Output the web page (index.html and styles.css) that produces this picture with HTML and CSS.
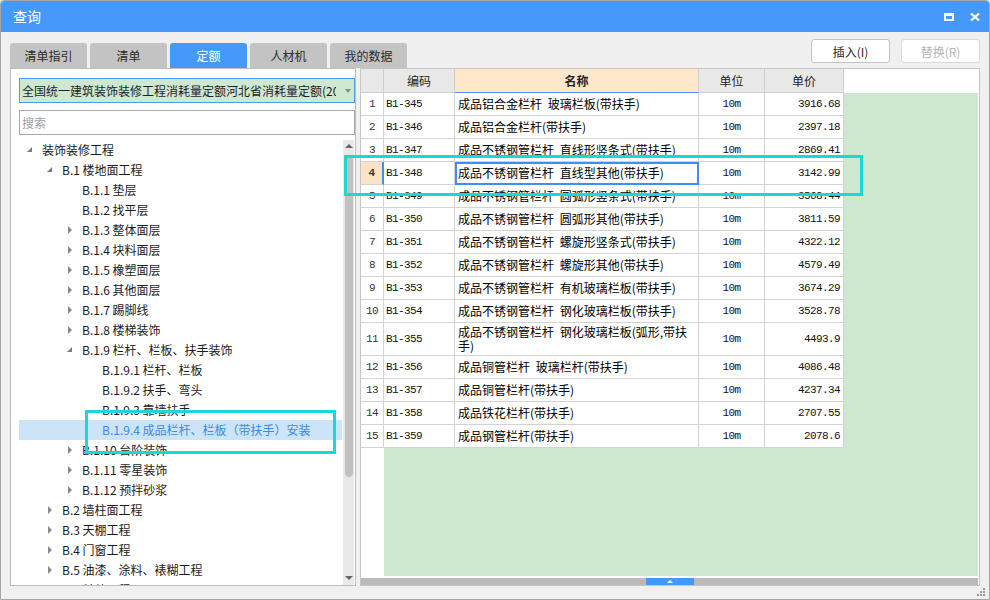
FILE: index.html
```html
<!DOCTYPE html>
<html lang="zh-CN">
<head>
<meta charset="utf-8">
<title>查询</title>
<link rel="stylesheet" href="styles.css">
</head>
<body>
<div class="window">
  <div class="titlebar">
    <span class="title">查询</span>
    <span class="ico-max"></span>
    <svg class="ico-close" width="10" height="8" viewBox="0 0 10 8"><path d="M1 0.5 L9 7.5 M9 0.5 L1 7.5" stroke="#fff" stroke-width="2.2"/></svg>
  </div>

  <div class="toolbar">
    <div class="tabs">
      <div class="tab">清单指引</div>
      <div class="tab">清单</div>
      <div class="tab active">定额</div>
      <div class="tab">人材机</div>
      <div class="tab">我的数据</div>
    </div>
    <div class="actions">
      <button class="btn">插入(I)</button>
      <button class="btn" disabled>替换(R)</button>
    </div>
  </div>

  <div class="main">
    <div class="left">
      <div class="select">
        <span class="select-text">全国统一建筑装饰装修工程消耗量定额河北省消耗量定额(2013)</span>
        <span class="caret"></span>
      </div>
      <input class="search" type="text" placeholder="搜索">
      <div class="tree">
        <div class="tree-list">
          <div class="node l0"><i class="tw open"></i><span>装饰装修工程</span></div>
          <div class="node l1"><i class="tw open"></i><span>B.1 楼地面工程</span></div>
          <div class="node l2"><i class="tw"></i><span>B.1.1 垫层</span></div>
          <div class="node l2"><i class="tw"></i><span>B.1.2 找平层</span></div>
          <div class="node l2"><i class="tw shut"></i><span>B.1.3 整体面层</span></div>
          <div class="node l2"><i class="tw shut"></i><span>B.1.4 块料面层</span></div>
          <div class="node l2"><i class="tw shut"></i><span>B.1.5 橡塑面层</span></div>
          <div class="node l2"><i class="tw shut"></i><span>B.1.6 其他面层</span></div>
          <div class="node l2"><i class="tw shut"></i><span>B.1.7 踢脚线</span></div>
          <div class="node l2"><i class="tw shut"></i><span>B.1.8 楼梯装饰</span></div>
          <div class="node l2"><i class="tw open"></i><span>B.1.9 栏杆、栏板、扶手装饰</span></div>
          <div class="node l3"><i class="tw"></i><span>B.1.9.1 栏杆、栏板</span></div>
          <div class="node l3"><i class="tw"></i><span>B.1.9.2 扶手、弯头</span></div>
          <div class="node l3"><i class="tw"></i><span>B.1.9.3 靠墙扶手</span></div>
          <div class="node l3 selected"><i class="tw"></i><span>B.1.9.4 成品栏杆、栏板（带扶手）安装</span></div>
          <div class="node l2"><i class="tw shut"></i><span>B.1.10 台阶装饰</span></div>
          <div class="node l2"><i class="tw shut"></i><span>B.1.11 零星装饰</span></div>
          <div class="node l2"><i class="tw shut"></i><span>B.1.12 预拌砂浆</span></div>
          <div class="node l1"><i class="tw shut"></i><span>B.2 墙柱面工程</span></div>
          <div class="node l1"><i class="tw shut"></i><span>B.3 天棚工程</span></div>
          <div class="node l1"><i class="tw shut"></i><span>B.4 门窗工程</span></div>
          <div class="node l1"><i class="tw shut"></i><span>B.5 油漆、涂料、裱糊工程</span></div>
          <div class="node l1"><i class="tw shut"></i><span>B.6 其他工程</span></div>
        </div>
        <div class="vscroll">
          <span class="vs-up"></span>
          <span class="vs-thumb"></span>
          <span class="vs-down"></span>
        </div>
      </div>
    </div>

    <div class="right">
      <div class="grid-head">
        <div class="hrow">
          <div class="hc"></div>
          <div class="hc">编码</div>
          <div class="hc current">名称</div>
          <div class="hc">单位</div>
          <div class="hc">单价</div>
        </div>
      </div>
      <div class="grid-body">
        <div class="rows">
          <div class="row"><div class="c num">1</div><div class="c code">B1-345</div><div class="c name">成品铝合金栏杆 玻璃栏板(带扶手)</div><div class="c unit">10m</div><div class="c price">3916.68</div></div>
          <div class="row"><div class="c num">2</div><div class="c code">B1-346</div><div class="c name">成品铝合金栏杆(带扶手)</div><div class="c unit">10m</div><div class="c price">2397.18</div></div>
          <div class="row"><div class="c num">3</div><div class="c code">B1-347</div><div class="c name">成品不锈钢管栏杆 直线形竖条式(带扶手)</div><div class="c unit">10m</div><div class="c price">2869.41</div></div>
          <div class="row cur"><div class="c num">4</div><div class="c code">B1-348</div><div class="c name">成品不锈钢管栏杆 直线型其他(带扶手)</div><div class="c unit">10m</div><div class="c price">3142.99</div></div>
          <div class="row"><div class="c num">5</div><div class="c code">B1-349</div><div class="c name">成品不锈钢管栏杆 圆弧形竖条式(带扶手)</div><div class="c unit">10m</div><div class="c price">3568.44</div></div>
          <div class="row"><div class="c num">6</div><div class="c code">B1-350</div><div class="c name">成品不锈钢管栏杆 圆弧形其他(带扶手)</div><div class="c unit">10m</div><div class="c price">3811.59</div></div>
          <div class="row"><div class="c num">7</div><div class="c code">B1-351</div><div class="c name">成品不锈钢管栏杆 螺旋形竖条式(带扶手)</div><div class="c unit">10m</div><div class="c price">4322.12</div></div>
          <div class="row"><div class="c num">8</div><div class="c code">B1-352</div><div class="c name">成品不锈钢管栏杆 螺旋形其他(带扶手)</div><div class="c unit">10m</div><div class="c price">4579.49</div></div>
          <div class="row"><div class="c num">9</div><div class="c code">B1-353</div><div class="c name">成品不锈钢管栏杆 有机玻璃栏板(带扶手)</div><div class="c unit">10m</div><div class="c price">3674.29</div></div>
          <div class="row"><div class="c num">10</div><div class="c code">B1-354</div><div class="c name">成品不锈钢管栏杆 钢化玻璃栏板(带扶手)</div><div class="c unit">10m</div><div class="c price">3528.78</div></div>
          <div class="row tall"><div class="c num">11</div><div class="c code">B1-355</div><div class="c name">成品不锈钢管栏杆 钢化玻璃栏板(弧形,带扶<br>手)</div><div class="c unit">10m</div><div class="c price">4493.9</div></div>
          <div class="row"><div class="c num">12</div><div class="c code">B1-356</div><div class="c name">成品铜管栏杆 玻璃栏杆(带扶手)</div><div class="c unit">10m</div><div class="c price">4086.48</div></div>
          <div class="row"><div class="c num">13</div><div class="c code">B1-357</div><div class="c name">成品铜管栏杆(带扶手)</div><div class="c unit">10m</div><div class="c price">4237.34</div></div>
          <div class="row"><div class="c num">14</div><div class="c code">B1-358</div><div class="c name">成品铁花栏杆(带扶手)</div><div class="c unit">10m</div><div class="c price">2707.55</div></div>
          <div class="row"><div class="c num">15</div><div class="c code">B1-359</div><div class="c name">成品钢管栏杆(带扶手)</div><div class="c unit">10m</div><div class="c price">2078.6</div></div>
        </div>
      </div>
      <div class="hscroll"><span class="hthumb"></span></div>
    </div>
  </div>

  <div class="statusbar">
    <svg class="grip" width="10" height="10" viewBox="0 0 10 10">
      <rect x="7" y="1" width="2" height="2" fill="#9a9a9a"/>
      <rect x="4" y="4" width="2" height="2" fill="#9a9a9a"/>
      <rect x="7" y="4" width="2" height="2" fill="#9a9a9a"/>
      <rect x="1" y="7" width="2" height="2" fill="#9a9a9a"/>
      <rect x="4" y="7" width="2" height="2" fill="#9a9a9a"/>
      <rect x="7" y="7" width="2" height="2" fill="#9a9a9a"/>
    </svg>
  </div>

  <div class="mark mark-grid"></div>
  <div class="mark mark-tree"></div>
</div>
</body>
</html>
```

FILE: styles.css
```css
* { box-sizing: border-box; }
html, body { margin: 0; padding: 0; }
body {
  width: 990px;
  height: 600px;
  overflow: hidden;
  background: #ffffff;
  font-family: "Noto Sans CJK SC", "Microsoft YaHei", sans-serif;
  font-size: 12px;
  color: #222;
}

.window {
  position: relative;
  width: 990px;
  height: 600px;
  border: 1px solid #a6a6a6;
  border-radius: 4px 4px 0 0;
  background: #f0f0f0;
  display: flex;
  flex-direction: column;
  overflow: hidden;
}

/* ---------- title bar ---------- */
.titlebar {
  flex: none;
  height: 31px;
  background: #4599fb;
  color: #fff;
  display: flex;
  align-items: center;
  padding: 0 9px 0 12px;
}
.title { flex: 1; font-size: 14px; line-height: 31px; }
.ico-max {
  width: 10px;
  height: 8px;
  border: 2px solid #fff;
  border-top-width: 3px;
  margin-right: 16px;
}
.ico-close { display: block; }

/* ---------- toolbar ---------- */
.toolbar {
  flex: none;
  height: 36px;
  display: flex;
  align-items: flex-end;
  padding: 0 9px 0 9px;
}
.tabs { display: flex; gap: 3px; }
.tab {
  width: 77px;
  height: 25px;
  background: #c3c3c3;
  border-radius: 3px 3px 0 0;
  color: #2a2a2a;
  font-size: 12px;
  display: flex;
  align-items: center;
  justify-content: center;
}
.tab.active { background: #4599fb; color: #fff; }
.actions {
  margin-left: auto;
  align-self: flex-start;
  margin-top: 7px;
  display: flex;
  gap: 11px;
}
.btn {
  width: 79px;
  height: 24px;
  padding: 0;
  background: #fff;
  border: 1px solid #c4c4c4;
  border-radius: 3px;
  font-family: "Noto Sans CJK SC", sans-serif;
  font-size: 12px;
  color: #2a2a2a;
}
.btn:disabled { color: #b4b4b4; border-color: #dadada; }

/* ---------- main ---------- */
.main {
  flex: none;
  height: 518px;
  display: flex;
  gap: 4px;
  padding: 0 9px;
}

/* left panel */
.left {
  width: 346px;
  flex: none;
  background: #fff;
  border: 1px solid #bdbdbd;
  display: flex;
  flex-direction: column;
  padding: 9px 0 0 8px;
}
.select {
  width: 336px;
  height: 25px;
  flex: none;
  background: #cee8d1;
  border: 1px solid #4a9cee;
  display: flex;
  align-items: center;
  padding-left: 2px;
}
.select-text {
  width: 314px;
  overflow: hidden;
  white-space: nowrap;
  color: #1e1e1e;
}
.caret {
  margin-left: 9px;
  width: 0;
  height: 0;
  border-left: 3px solid transparent;
  border-right: 3px solid transparent;
  border-top: 4px solid #8a8a8a;
}
.search {
  width: 336px;
  height: 25px;
  flex: none;
  margin: 7px 0 0 0;
  border: 1px solid #a9a9a9;
  padding: 0 2px;
  font-family: "Noto Sans CJK SC", sans-serif;
  font-size: 12px;
  outline: none;
  background: #fff;
}
.search::placeholder { color: #a0a0a0; }

.tree {
  flex: 1;
  min-height: 0;
  margin-top: 5px;
  margin-left: -8px;
  display: flex;
}
.tree-list {
  flex: 1;
  min-width: 0;
  overflow: hidden;
  padding-left: 8px;
  margin-right: 1px;
}
.node {
  height: 20px;
  display: flex;
  align-items: flex-start;
  white-space: nowrap;
  color: #1b1b1b;
  font-size: 12px;
}
.node span { line-height: 19px; }
.node.l0 { padding-left: 4px; }
.node.l1 { padding-left: 24px; }
.node.l2 { padding-left: 44px; }
.node.l3 { padding-left: 64px; }
.node.selected { background: #cce4f7; color: #3a8ae2; }
.tw {
  width: 16px;
  height: 20px;
  margin-right: 3px;
  flex: none;
  position: relative;
}
.tw.open::before {
  content: "";
  position: absolute;
  left: 4px;
  top: 7px;
  width: 0;
  height: 0;
  border-left: 5px solid transparent;
  border-bottom: 5px solid #7c7c7c;
}
.tw.shut::before {
  content: "";
  position: absolute;
  left: 5px;
  top: 6px;
  width: 0;
  height: 0;
  border-top: 4px solid transparent;
  border-bottom: 4px solid transparent;
  border-left: 4px solid #8a8a8a;
}

.vscroll {
  width: 11px;
  flex: none;
  margin-right: 1px;
  background: #e8e8e8;
  display: flex;
  flex-direction: column;
  align-items: center;
}
.vs-up {
  margin-top: 4px;
  width: 0;
  height: 0;
  border-left: 4px solid transparent;
  border-right: 4px solid transparent;
  border-bottom: 4px solid #666;
}
.vs-thumb {
  margin-top: 7px;
  width: 8px;
  height: 322px;
  border-radius: 4px;
  background: #c1c1c1;
}
.vs-down {
  margin-top: auto;
  margin-bottom: 5px;
  width: 0;
  height: 0;
  border-left: 4px solid transparent;
  border-right: 4px solid transparent;
  border-top: 4px solid #666;
}

/* right panel */
.right {
  width: 620px;
  flex: none;
  border: 1px solid #c6c6c6;
  background: #fff;
  padding-right: 1px;
  display: flex;
  flex-direction: column;
}
.grid-head { flex: none; background: #fff; }
.hrow, .row {
  display: grid;
  grid-template-columns: 23px 71px 244px 66px 79px;
  width: 483px;
}
.hc {
  height: 24px;
  background: #e8e8e8;
  border-right: 1px solid #cfcfcf;
  border-bottom: 1px solid #cfcfcf;
  display: flex;
  align-items: center;
  justify-content: center;
  font-size: 12px;
  color: #222;
}
.hc.current {
  background: #fee7ca;
  font-weight: bold;
  border-bottom-color: #4a97f0;
}

.grid-body {
  flex: 1;
  min-height: 0;
  background: linear-gradient(90deg, #fff 23px, #cde8cf 23px);
  border-bottom: 1px solid #fff;
}
.rows { width: 483px; background: #fff; }
.row { height: 23px; }
.row.tall { height: 33px; }
.c {
  border-right: 1px solid #d3d3d3;
  border-bottom: 1px solid #d3d3d3;
  display: flex;
  align-items: center;
  overflow: hidden;
  white-space: nowrap;
  color: #111;
}
.c.num {
  justify-content: center;
  font-family: "Liberation Mono", monospace;
  font-size: 11px;
  letter-spacing: -0.6px;
  color: #333;
}
.c.code {
  padding-left: 2px;
  font-family: "Liberation Mono", monospace;
  font-size: 11px;
  letter-spacing: -0.6px;
}
.c.name {
  padding-left: 3px;
  font-family: "Noto Sans CJK SC", sans-serif;
  font-size: 12px;
  white-space: normal;
  line-height: 14px;
  word-spacing: 3px;
  color: #000;
}
.c.unit {
  justify-content: center;
  font-family: "Liberation Mono", monospace;
  font-size: 11px;
  letter-spacing: -0.6px;
}
.c.price {
  justify-content: flex-end;
  padding-right: 3px;
  font-family: "Liberation Mono", monospace;
  font-size: 11px;
  letter-spacing: -0.6px;
}
.row.cur .num {
  background: #fde3c4;
  font-weight: bold;
  border-right: 2px solid #3e8ff2;
}
.row.cur .name { outline: 2px solid #3e8ff2; outline-offset: -2px; }

.hscroll {
  flex: none;
  height: 7px;
  background: #bababa;
  margin-top: 1px;
  display: flex;
  justify-content: center;
}
.hthumb {
  width: 48px;
  height: 7px;
  background: #4599fb;
  position: relative;
}
.hthumb::after {
  content: "";
  position: absolute;
  left: 21px;
  top: 2px;
  border-left: 3px solid transparent;
  border-right: 3px solid transparent;
  border-bottom: 3px solid #fff;
}

/* status bar */
.statusbar {
  flex: 1;
  display: flex;
  justify-content: flex-end;
  align-items: flex-end;
  padding: 0 3px 2px 0;
}
.grip { display: block; }

/* annotation rectangles */
.mark {
  position: absolute;
  border: 3px solid #1cd7d8;
  pointer-events: none;
}
.mark-grid { left: 343px; top: 154px; width: 519px; height: 41px; }
.mark-tree { left: 84px; top: 409px; width: 251px; height: 44px; }
```
